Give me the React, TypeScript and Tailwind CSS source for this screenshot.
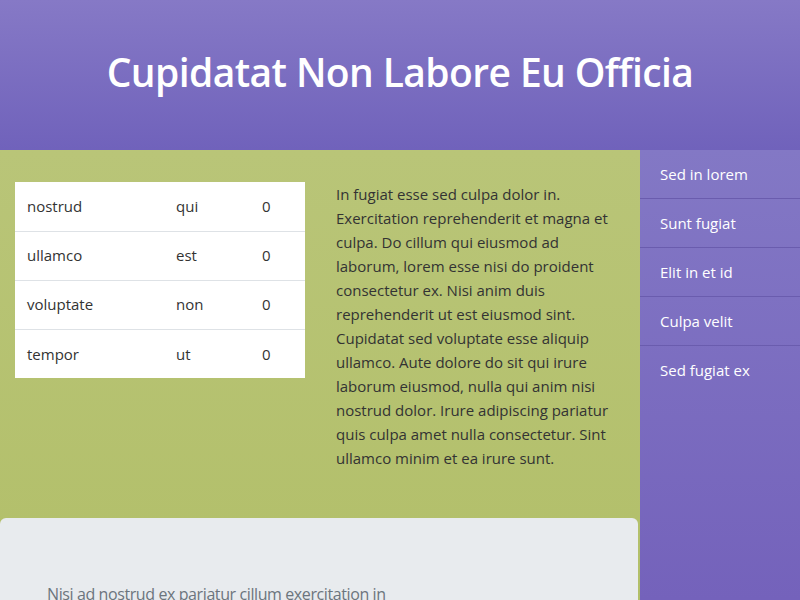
import React from 'react';

const rows = [
  ['nostrud', 'qui', '0'],
  ['ullamco', 'est', '0'],
  ['voluptate', 'non', '0'],
  ['tempor', 'ut', '0'],
];

const links = ['Sed in lorem', 'Sunt fugiat', 'Elit in et id', 'Culpa velit', 'Sed fugiat ex'];

const App: React.FC = () => {
  return (
    <div className="w-[800px] h-[600px] overflow-hidden flex flex-col font-['Open_Sans',sans-serif]">
      {/* Header */}
      <header className="h-[150px] shrink-0 flex items-center justify-center pb-[6px] bg-gradient-to-b from-[#8679c6] to-[#7062bb]">
        <h1 className="text-white text-[39px] font-semibold tracking-[-0.6px]">Cupidatat Non Labore Eu Officia</h1>
      </header>

      <div className="flex flex-1 min-h-0">
        {/* Main column */}
        <main className="w-[640px] flex flex-col bg-gradient-to-b from-[#b9c578] to-[#b2bf69]">
          <div className="h-[368px] shrink-0 flex pt-[32px] pl-[15px]">
            <table className="w-[290px] h-[196px] bg-white text-[15px] text-[#333] border-collapse self-start">
              <tbody>
                {rows.map((r, i) => (
                  <tr key={i} className={i < rows.length - 1 ? 'border-b border-[#dee2e6]' : ''}>
                    <td className="pl-[12px] h-[48px] w-[161px]">{r[0]}</td>
                    <td className="w-[86px]">{r[1]}</td>
                    <td>{r[2]}</td>
                  </tr>
                ))}
              </tbody>
            </table>
            <p className="ml-[31px] w-[280px] text-[15px] leading-[24px] text-[#333]">
              In fugiat esse sed culpa dolor in. Exercitation reprehenderit et magna et culpa. Do cillum qui eiusmod ad laborum, lorem esse nisi do proident consectetur ex. Nisi anim duis reprehenderit ut est eiusmod sint. Cupidatat sed voluptate esse aliquip ullamco. Aute dolore do sit qui irure laborum eiusmod, nulla qui anim nisi nostrud dolor. Irure adipiscing pariatur quis culpa amet nulla consectetur. Sint ullamco minim et ea irure sunt.
            </p>
          </div>
          <div className="flex-1 bg-[#e8ebee] rounded-t-[6px] mr-[2px] pt-[64px] pl-[47px]">
            <p className="text-[16px] text-[#6c757d] tracking-[-0.4px]">Nisi ad nostrud ex pariatur cillum exercitation in</p>
          </div>
        </main>

        {/* Sidebar */}
        <aside className="w-[160px] bg-gradient-to-b from-[#8378c5] to-[#7462bb]">
          {links.map((l, i) => (
            <div
              key={l}
              className={`h-[49px] flex items-center pl-[20px] text-white text-[15px] ${i < links.length - 1 ? 'border-b border-[#6a5cae]' : ''}`}
            >
              {l}
            </div>
          ))}
        </aside>
      </div>
    </div>
  );
};

export default App;
